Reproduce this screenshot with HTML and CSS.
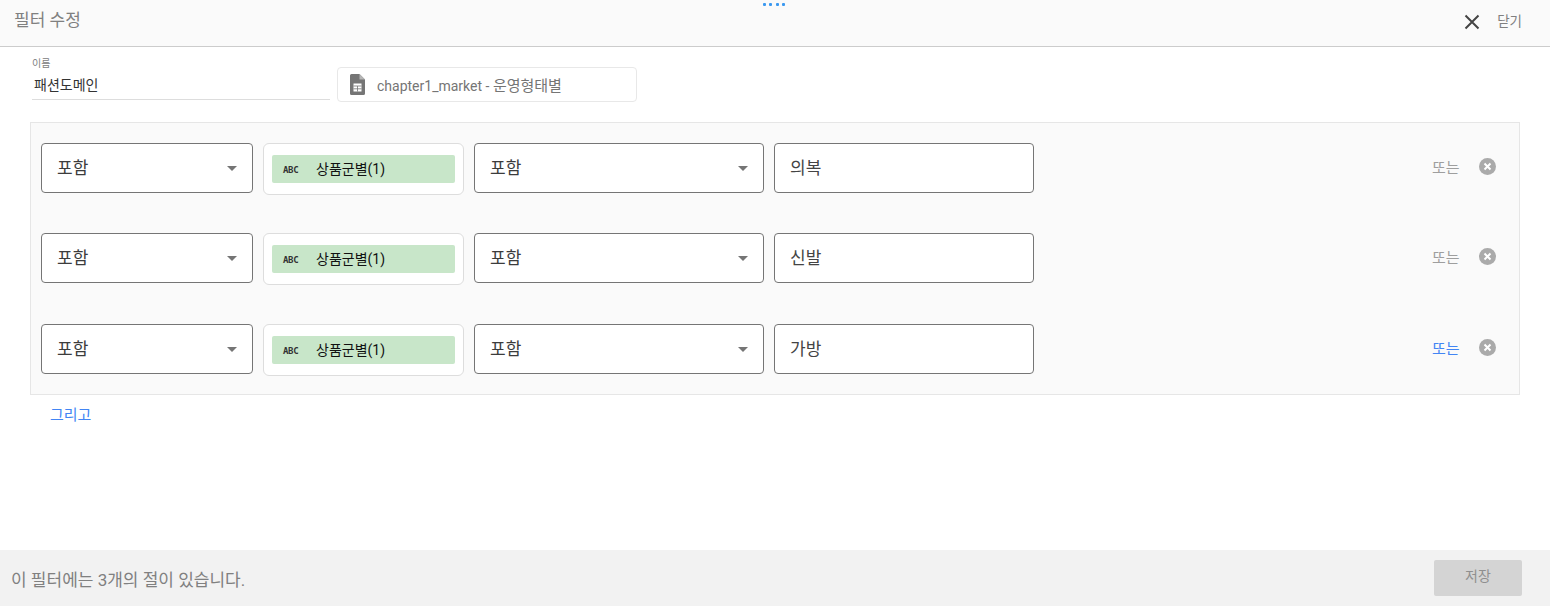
FILE: index.html
```html
<!DOCTYPE html>
<html lang="ko">
<head>
<meta charset="utf-8">
<title>필터 수정</title>
<link rel="stylesheet" href="styles.css">
</head>
<body>
<div class="page">
  <div class="handle"><i></i><i></i><i></i><i></i></div>
  <header class="top">
    <span class="title">필터 수정</span>
    <button class="close">
      <svg width="16" height="16" viewBox="0 0 16 16"><path d="M1.5 1.5 14.5 14.5M14.5 1.5 1.5 14.5" stroke="#444" stroke-width="2" fill="none"/></svg>
      <span>닫기</span>
    </button>
  </header>
  <section class="meta">
    <div class="name">
      <label>이름</label>
      <div class="value">패션도메인</div>
    </div>
    <div class="source">
      <svg width="15" height="21" viewBox="0 0 15 21"><path d="M1.5 0H9.5L15 5.5V19.5A1.5 1.5 0 0 1 13.5 21H1.5A1.5 1.5 0 0 1 0 19.5V1.5A1.5 1.5 0 0 1 1.5 0Z" fill="#757575"/><path d="M9.5 0 15 5.5H9.5Z" fill="#b5b5b5"/><rect x="3.5" y="9.5" width="8" height="8" fill="#fff"/><path d="M3.5 12H11.5M3.5 14.8H11.5M7.5 12V17.5" stroke="#757575" stroke-width=".8" fill="none"/></svg>
      <span>chapter1_market - <span class="hangul">운영형태별</span></span>
    </div>
  </section>
  <section class="clauses">
    <div class="row">
      <div class="select short"><span>포함</span><b></b></div>
      <div class="field"><div class="chip"><em>ABC</em><span>상품군별(1)</span></div></div>
      <div class="select long"><span>포함</span><b></b></div>
      <div class="input">의복</div>
      <div class="actions"><span class="or">또는</span>
        <svg class="x" width="17" height="17" viewBox="0 0 17 17"><circle cx="8.5" cy="8.5" r="8.5" fill="#aaa"/><path d="M5.5 5.5 11.5 11.5M11.5 5.5 5.5 11.5" stroke="#fff" stroke-width="2"/></svg></div>
    </div>
    <div class="row">
      <div class="select short"><span>포함</span><b></b></div>
      <div class="field"><div class="chip"><em>ABC</em><span>상품군별(1)</span></div></div>
      <div class="select long"><span>포함</span><b></b></div>
      <div class="input">신발</div>
      <div class="actions"><span class="or">또는</span>
        <svg class="x" width="17" height="17" viewBox="0 0 17 17"><circle cx="8.5" cy="8.5" r="8.5" fill="#aaa"/><path d="M5.5 5.5 11.5 11.5M11.5 5.5 5.5 11.5" stroke="#fff" stroke-width="2"/></svg></div>
    </div>
    <div class="row">
      <div class="select short"><span>포함</span><b></b></div>
      <div class="field"><div class="chip"><em>ABC</em><span>상품군별(1)</span></div></div>
      <div class="select long"><span>포함</span><b></b></div>
      <div class="input">가방</div>
      <div class="actions"><span class="or active">또는</span>
        <svg class="x" width="17" height="17" viewBox="0 0 17 17"><circle cx="8.5" cy="8.5" r="8.5" fill="#aaa"/><path d="M5.5 5.5 11.5 11.5M11.5 5.5 5.5 11.5" stroke="#fff" stroke-width="2"/></svg></div>
    </div>
  </section>
  <a class="and">그리고</a>
  <footer class="bottom">
    <span class="note">이 필터에는 3개의 절이 있습니다.</span>
    <button class="save">저장</button>
  </footer>
</div>
</body>
</html>
```

FILE: styles.css
```css
* { box-sizing: border-box; }
html, body { margin: 0; height: 100%; }
body { background: #fff; font-family: Roboto, "Noto Sans CJK KR", sans-serif; color: #212121; overflow: hidden; }
.page { width: 1550px; height: 606px; display: flex; flex-direction: column; position: relative; }
.handle { position: absolute; top: 3px; left: 763px; display: flex; gap: 3.3px; }
.handle i { width: 3px; height: 3px; border-radius: 1px; background: #3b99f0; }
.top { height: 47px; flex: none; background: #fafafa; border-bottom: 1px solid #ccc; display: flex; align-items: center; justify-content: space-between; padding: 0 28px 3px 14px; }
.title { font-size: 17px; line-height: 20px; color: #808080; margin-top: -4px; }
.close { display: flex; align-items: center; gap: 17px; border: 0; background: none; padding: 0; font: inherit; font-size: 13.5px; color: #808080; }
.close span { margin-top: -4px; }
.meta { height: 75px; flex: none; display: flex; align-items: flex-start; padding: 10px 0 0 32px; }
.name { width: 298px; height: 43px; border-bottom: 1px solid #ddd; }
.name label { display: block; font-size: 10px; line-height: 13px; color: #808080; }
.name .value { font-size: 14px; line-height: 20px; margin: 5px 0 0 2px; color: #333; }
.source { width: 300px; height: 35px; margin: 10px 0 0 7px; border: 1px solid #e8e8e8; border-radius: 4px; display: flex; align-items: center; padding-left: 12px; gap: 12px; font-size: 14px; color: #757575; background: #fff; }
.hangul { font-size: 15px; }
.clauses { margin: 0 30px; height: 273px; flex: none; background: #fafafa; border: 1px solid #e6e6e6; padding: 20px 0 0 10px; display: flex; flex-direction: column; gap: 40px; }
.row { height: 50px; display: flex; align-items: flex-start; gap: 10px; }
.row:nth-child(3) { margin-top: 1px; }
.select { height: 50px; background: #fff; border: 1px solid #757575; border-radius: 4px; display: flex; align-items: center; justify-content: space-between; padding: 0 15px; font-size: 17px; color: #3c3c3c; }
.select span { margin-top: -4px; }
.select b { width: 0; height: 0; border-left: 5px solid transparent; border-right: 5px solid transparent; border-top: 5px solid #757575; }
.short { width: 212px; }
.long { width: 290px; }
.field { width: 201px; height: 52px; background: #fff; border: 1px solid #ddd; border-radius: 6px; padding: 11px 8px 0; }
.chip { height: 28px; background: #c8e6c9; border-radius: 2px; display: flex; align-items: center; font-size: 14px; color: #111; padding-left: 11px; }
.chip span { margin-top: -3px; }
.chip em { font: 700 9px "DejaVu Sans Mono", monospace; font-style: normal; color: #333; width: 33px; flex: none; margin-top: 1px; letter-spacing: -.3px; }
.input { width: 260px; height: 50px; background: #fff; border: 1px solid #757575; border-radius: 4px; padding: 0 15px; display: flex; align-items: center; font-size: 17px; padding-bottom: 4px; color: #444; }
.actions { margin-left: auto; height: 50px; width: 87px; flex: none; display: flex; align-items: center; gap: 18px; padding-bottom: 2px; }
.or { font-size: 15px; color: #9e9e9e; width: 28px; flex: none; line-height: 16px; margin-top: 2px; white-space: nowrap; }
.or.active { color: #4285f4; }
.x { flex: none; margin-left: 1px; margin-top: -2px; }
.and { display: block; margin: 11px 0 0 50px; font-size: 15px; line-height: 18px; color: #4285f4; flex: none; }
.bottom { margin-top: auto; height: 56px; flex: none; background: #f2f2f2; display: flex; align-items: center; justify-content: space-between; padding: 0 28px 0 11px; }
.note { font-size: 17px; color: #808080; }
.save { width: 88px; height: 36px; background: #d4d4d4; border: 0; border-radius: 2px; font: inherit; font-size: 14px; color: #8f8f8f; padding: 0 0 6px; margin-top: -1px; }
```
